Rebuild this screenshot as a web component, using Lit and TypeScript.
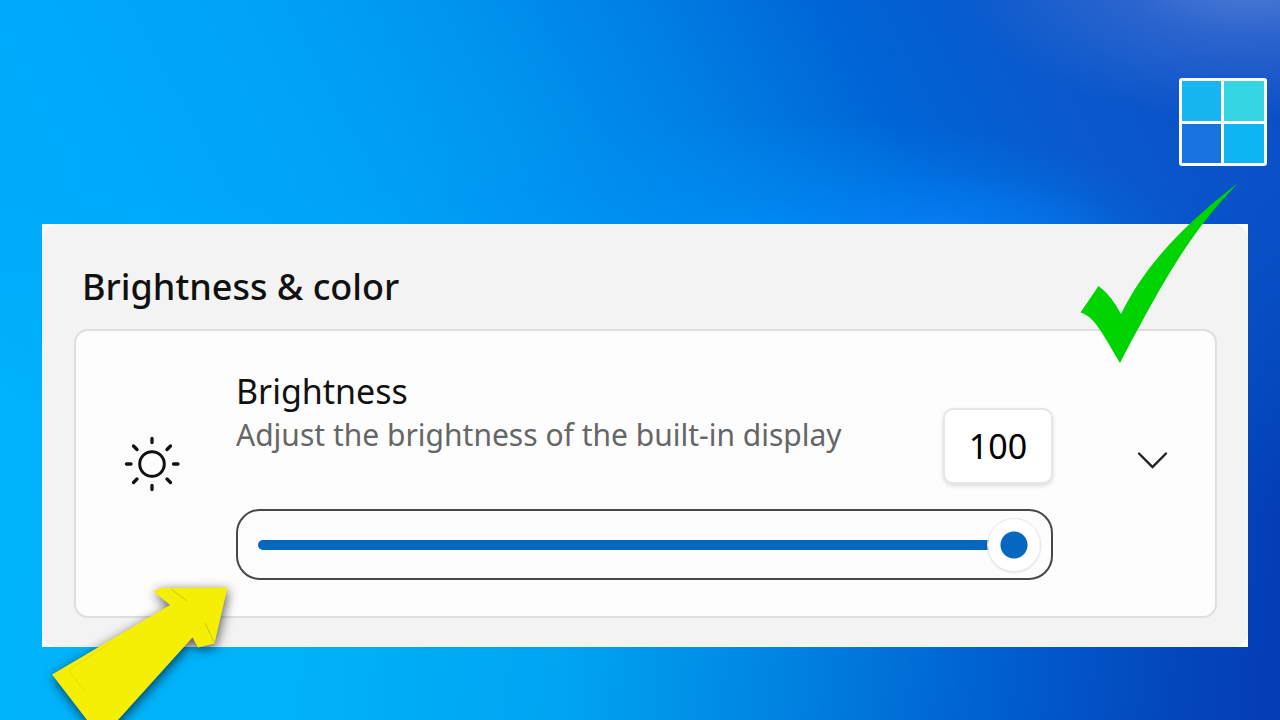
import { LitElement, html, css } from "lit";
import { customElement, state } from "lit/decorators.js";

@customElement("app-root")
export class AppRoot extends LitElement {
  @state() private level = 100;
  @state() private expanded = false;

  static styles = css`
    :host {
      display: block;
      position: relative;
      box-sizing: border-box;
      min-height: 100vh;
      overflow: hidden;
      font-family: "Noto Sans", "Open Sans", sans-serif;
      color: #111;
      background:
        radial-gradient(ellipse 300px 150px at 98% -4%, #6a8cdacc 0%, #4c78d480 45%, #2058cc00 100%),
        radial-gradient(ellipse 190px 70px at 74% 34%, #1084ff 0%, #0a7cf890 45%, #0a70f000 100%),
        radial-gradient(ellipse 420px 140px at 62% 36%, #0092ff 0%, #008cfa80 40%, #0080f000 100%),
        linear-gradient(62deg, #00aefc 0%, #00a9fb 25%, #00a2f8 38%, #0096f0 49%, #0080e4 61%, #0064d6 73%, #0a58cc 84%, #0a4cc4 100%);
    }
    :host::before {
      content: "";
      position: absolute;
      inset: auto 0 0 0;
      height: 74%;
      background: linear-gradient(96deg, #00b4fc 0%, #00b2fa 26%, #00a4f2 46%, #0084e2 62%, #0060cf 78%, #0446bc 92%, #043cb4 100%);
      -webkit-mask-image: linear-gradient(transparent, #000 60%);
      mask-image: linear-gradient(transparent, #000 60%);
    }
    .top {
      display: flex;
      justify-content: flex-end;
      padding: 78px 13px 58px;
    }
    .logo {
      display: block;
      width: 88px;
      height: 88px;
    }
    .sheet {
      position: relative;
      margin: 0 32px 0 42px;
      background: #fff;
    }
    .panel {
      padding: 40px 30px 28px 31px;
      border: 1px solid #f6f6f6;
      border-radius: 14px;
      background: #f3f3f3;
    }
    h1 {
      margin: 0 0 20px 8px;
      font-size: 36px;
      line-height: 44px;
      font-weight: 500;
    }
    .card {
      display: grid;
      grid-template-columns: 160px minmax(0, 1fr) 162px;
      border: 2px solid #dedede;
      border-radius: 14px;
      background: #fdfdfd;
      padding: 36px 0;
    }
    .sun {
      display: block;
      width: 60px;
      height: 60px;
      align-self: center;
      margin: 0 0 20px 46px;
    }
    .row {
      display: flex;
      align-items: flex-end;
      justify-content: space-between;
      margin-bottom: 25px;
    }
    .words {
      align-self: flex-start;
      padding-bottom: 29px;
    }
    label {
      display: block;
      font-size: 34px;
      line-height: 48px;
    }
    .hint {
      margin: 0;
      font-size: 30px;
      line-height: 40px;
      color: #666;
    }
    output {
      box-sizing: border-box;
      min-width: 110px;
      padding: 14px 20px;
      border: 2px solid #e6e6e6;
      border-radius: 10px;
      background: #fff;
      box-shadow: 0 2px 4px #0002;
      font-size: 34px;
      line-height: 44px;
      text-align: center;
      color: #000;
    }
    .slider {
      display: flex;
      align-items: center;
      padding: 7px 11px 7px 20px;
      border: 2px solid #484848;
      border-radius: 24px;
    }
    input {
      -webkit-appearance: none;
      appearance: none;
      display: block;
      flex: 1;
      min-width: 0;
      height: 53px;
      margin: 0;
      background: none;
      cursor: pointer;
    }
    input::-webkit-slider-runnable-track {
      height: 10px;
      border-radius: 5px;
      background: linear-gradient(90deg, #0567c0 var(--fill), #c8c8c8 var(--fill));
    }
    input::-webkit-slider-thumb {
      -webkit-appearance: none;
      width: 52px;
      height: 52px;
      margin-top: -21px;
      border-radius: 50%;
      background: radial-gradient(circle, #0567c0 13px, #fff 14px);
      box-shadow: 0 0 0 1px #e8e8e8, 0 1px 3px #0003;
    }
    .toggle {
      align-self: center;
      justify-self: center;
      margin: 0 0 22px 36px;
      padding: 8px;
      border: 0;
      background: none;
      cursor: pointer;
    }
    .chevron {
      display: block;
      width: 32px;
      height: 32px;
    }
    .check {
      position: absolute;
      top: -42px;
      right: 9px;
      width: 160px;
      height: 182px;
      pointer-events: none;
    }
    .arrow {
      position: absolute;
      left: -2px;
      top: 352px;
      width: 200px;
      height: 180px;
      overflow: visible;
      filter: drop-shadow(1px 3px 6px #000a);
      pointer-events: none;
    }
  `;

  render() {
    return html`
      <header class="top">
        <svg class="logo" viewBox="0 0 88 88" role="img" aria-label="Windows">
          <rect width="88" height="88" rx="3" fill="#fbfdff" />
          <rect x="3" y="3" width="39" height="40" fill="#18b5f3" />
          <rect x="45" y="3" width="40" height="40" fill="#34d4e4" />
          <rect x="3" y="46" width="39" height="39" fill="#1872e0" />
          <rect x="45" y="46" width="40" height="39" fill="#0eb5f3" />
        </svg>
      </header>
      <main class="sheet">
        <section class="panel">
          <h1>Brightness &amp; color</h1>
          <div class="card">
            <svg class="sun" viewBox="0 0 60 60" fill="none" stroke="#111" stroke-linecap="round" aria-hidden="true">
              <circle cx="30" cy="30" r="12.300" stroke-width="3" />
              <path
                stroke-width="3.300"
                d="M30 4.500v4M30 51.500v4M4.500 30h4.500M51.500 30h4.500M11.500 12l3.500 3.500M48.500 12l-3.500 3.500M11.500 48.500l3.500-3.500M48.500 48.500l-3.500-3.500"
              />
            </svg>
            <div>
              <div class="row">
                <div class="words">
                  <label for="level">Brightness</label>
                  <p class="hint" id="hint">Adjust the brightness of the built-in display</p>
                </div>
                <output for="level">${this.level}</output>
              </div>
              <div class="slider">
                <input
                  id="level"
                  type="range"
                  min="0"
                  max="100"
                  aria-describedby="hint"
                  .value=${String(this.level)}
                  style="--fill: ${this.level}%"
                  @input=${(e: Event) => (this.level = Number((e.target as HTMLInputElement).value))}
                />
              </div>
            </div>
            <button
              class="toggle"
              type="button"
              aria-label="More brightness options"
              aria-expanded=${this.expanded ? "true" : "false"}
              @click=${() => (this.expanded = !this.expanded)}
            >
              <svg class="chevron" viewBox="0 0 32 32" fill="none" stroke="#222" stroke-width="2.400" stroke-linecap="round" aria-hidden="true">
                <path d="M3 6.500L16.500 20L30 6.500" />
              </svg>
            </button>
          </div>
        </section>
        <svg class="check" viewBox="0 0 160 182" aria-hidden="true">
          <path
            fill="#00d400"
            d="M1.500 130.500L19.500 104Q32 113 42 132C66 84 101 46 159 1C113 49 90 88 41 181C23 151 16 135 1.500 130.500Z"
          />
        </svg>
        <svg class="arrow" viewBox="0 0 200 180" aria-hidden="true">
          <path
            fill="#f5ee05"
            d="M12 98.500L130 29L113.500 15.500L121 12L187.500 11.500L174.500 67.500L158 71.500L152.500 61.500L78 144L61 163L47 144Z"
          />
          <path
            fill="none"
            stroke="#8f8a1a"
            stroke-width="0.400"
            d="M131 13l16 12M165 47l9 19"
          />
          <path fill="none" stroke="#d8d000" stroke-width="0.500" d="M72 66L29 94l16 22" />
        </svg>
      </main>
    `;
  }
}
